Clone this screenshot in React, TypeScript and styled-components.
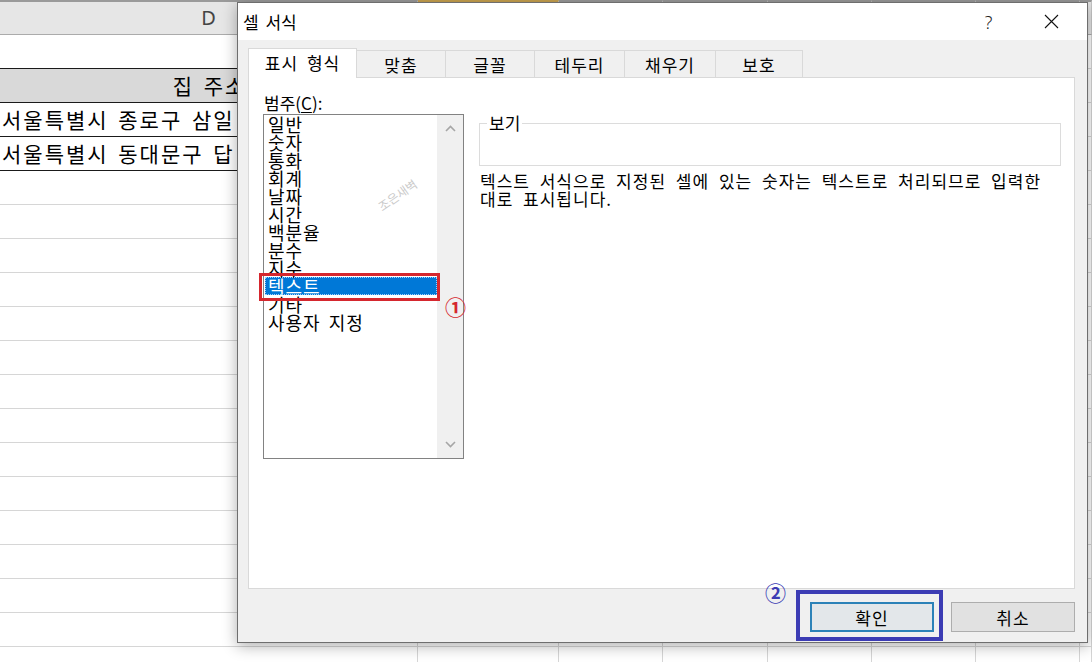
import React from 'react';
import styled, { createGlobalStyle } from 'styled-components';

const GlobalStyle = createGlobalStyle`
  html, body {
    margin: 0;
    padding: 0;
    overflow: hidden;
    background: #ffffff;
  }
  body {
    font-family: "Noto Sans CJK KR", "Noto Sans", sans-serif;
    color: #000;
  }
`;

const Screen = styled.div`
  position: relative;
  width: 1092px;
  height: 662px;
  overflow: hidden;
  background: #ffffff;
`;

// spreadsheet behind the dialog
const Sheet = styled.div`
  display: grid;
  grid-template-columns: 418px 141px 104px 105px 104px 104px 104px 1fr;
  grid-template-rows: 35px;
  grid-auto-rows: 34px;
`;

const HeadCell = styled.div<{ $selected?: boolean }>`
  box-sizing: border-box;
  background: #e6e6e6;
  border-top: 2px solid ${p => (p.$selected ? '#c9a24f' : '#9a9a9a')};
  border-bottom: 1px solid #ababab;
  border-right: 1px solid #c8c8c8;
  font-family: "Noto Sans", sans-serif;
  font-size: 20px;
  line-height: 31px;
  color: #444;
  text-align: center;
`;

const Cell = styled.div<{ $line: 'black' | 'gray'; $fill?: boolean; $center?: boolean }>`
  box-sizing: border-box;
  border-bottom: 1px solid ${p => (p.$line === 'black' ? '#1a1a1a' : '#d6d6d6')};
  border-right: 1px solid #d6d6d6;
  background: ${p => (p.$fill ? '#d9d9d9' : '#ffffff')};
  font-size: 21px;
  line-height: 33px;
  padding-left: 2px;
  white-space: nowrap;
  overflow: hidden;
  letter-spacing: 2px;
  word-spacing: 3px;
  text-align: ${p => (p.$center ? 'center' : 'left')};
`;

// dialog window
const Dialog = styled.div`
  position: absolute;
  left: 237px;
  top: 2px;
  width: 851px;
  height: 641px;
  box-sizing: border-box;
  border: 1px solid #6e6e6e;
  background: #f0f0f0;
  box-shadow: 0 3px 14px rgba(0, 0, 0, 0.32);
  display: flex;
  flex-direction: column;
`;

const TitleBar = styled.div`
  height: 37px;
  background: #ffffff;
  display: flex;
  align-items: center;
  padding-left: 5px;
`;

const Title = styled.div`
  flex: 1;
  font-size: 17px;
  word-spacing: 3px;
`;

const ControlButton = styled.div`
  width: 63px;
  height: 37px;
  display: flex;
  align-items: center;
  justify-content: center;
  font-family: "Noto Sans", sans-serif;
  font-size: 18px;
  font-weight: 300;
  color: #222;
`;

const CloseButton = styled(ControlButton)`
  margin-right: 4px;
`;

const Body = styled.div`
  padding: 8px 12px 0 10px;
`;

const TabRow = styled.div`
  display: flex;
  align-items: flex-end;
  height: 29px;
`;

const Tab = styled.div<{ $active?: boolean; $w: number }>`
  box-sizing: border-box;
  width: ${p => p.$w}px;
  height: ${p => (p.$active ? 30 : 27)}px;
  margin-bottom: ${p => (p.$active ? -1 : 0)}px;
  position: relative;
  z-index: ${p => (p.$active ? 2 : 1)};
  background: ${p => (p.$active ? '#ffffff' : '#f0f0f0')};
  border: 1px solid #d9d9d9;
  border-bottom: none;
  margin-left: ${p => (p.$active ? 0 : -1)}px;
  display: flex;
  align-items: center;
  justify-content: center;
  font-size: 17px;
  letter-spacing: 1px;
  word-spacing: 4px;
  padding-bottom: ${p => (p.$active ? 2 : 0)}px;
`;

const Panel = styled.div`
  box-sizing: border-box;
  height: 512px;
  background: #ffffff;
  border: 1px solid #d9d9d9;
  padding: 14px 13px 0 14px;
  display: flex;
  gap: 15px;
  align-items: flex-start;
`;

const LeftCol = styled.div`
  width: 201px;
  flex-shrink: 0;
`;

const Label = styled.div`
  font-size: 17px;
  line-height: 22px;
  padding-left: 1px;
  u {
    text-decoration: underline;
    text-underline-offset: 2px;
  }
`;

const ListWrap = styled.div`
  position: relative;
`;

const ListBox = styled.div`
  box-sizing: border-box;
  height: 345px;
  border: 1px solid #828282;
  display: flex;
  background: #ffffff;
`;

const Items = styled.div`
  flex: 1;
`;

const Item = styled.div<{ $selected?: boolean }>`
  box-sizing: border-box;
  height: 18px;
  line-height: 18px;
  font-size: 18px;
  padding-left: 3px;
  margin-left: 1px;
  white-space: nowrap;
  letter-spacing: 1px;
  word-spacing: 3px;
  background: ${p => (p.$selected ? '#0078d7' : 'transparent')};
  color: ${p => (p.$selected ? '#ffffff' : '#000')};
  outline: ${p => (p.$selected ? '1px dotted #9fd0ff' : 'none')};
  outline-offset: -1px;
`;

const ScrollBar = styled.div`
  width: 26px;
  background: #f0f0f0;
  display: flex;
  flex-direction: column;
  justify-content: space-between;
  align-items: center;
  padding: 10px 0;
`;

const Watermark = styled.div`
  position: absolute;
  left: 112px;
  top: 72px;
  font-size: 12px;
  color: #cacaca;
  transform: rotate(-35deg);
  white-space: nowrap;
`;

const RedMark = styled.div`
  position: absolute;
  left: -4px;
  top: 159px;
  width: 181px;
  height: 28px;
  box-sizing: border-box;
  border: 3px solid #d5272e;
`;

const Badge = styled.div<{ $color: string }>`
  position: absolute;
  font-size: 21px;
  font-weight: 700;
  line-height: 1;
  color: ${p => p.$color};
`;

const RightCol = styled.div`
  flex: 1;
  padding-top: 21px;
`;

const Preview = styled.fieldset`
  box-sizing: border-box;
  margin: 0;
  height: 53px;
  padding: 0 8px;
  border: 1px solid #dcdcdc;
  legend {
    font-size: 17px;
    line-height: 20px;
    padding: 0 2px;
    margin-left: -1px;
  }
`;

const Description = styled.div`
  margin-top: 6px;
  font-size: 17px;
  line-height: 18px;
  letter-spacing: 1px;
  word-spacing: 5px;
  padding-left: 1px;
`;

const Footer = styled.div`
  display: flex;
  justify-content: flex-end;
  gap: 17px;
  padding-top: 13px;
`;

const ButtonWrap = styled.div`
  position: relative;
`;

const Button = styled.div<{ $primary?: boolean }>`
  box-sizing: border-box;
  width: 124px;
  height: 30px;
  display: flex;
  align-items: center;
  justify-content: center;
  font-size: 17px;
  letter-spacing: 1px;
  background: ${p => (p.$primary ? '#e3e7ea' : '#e1e1e1')};
  border: ${p => (p.$primary ? '2px solid #2c82b8' : '1px solid #adadad')};
`;

const BlueMark = styled.div`
  position: absolute;
  left: -14px;
  top: -12px;
  right: -9px;
  bottom: -9px;
  border: 4px solid #3c3cb4;
`;

const categories = ['일반', '숫자', '통화', '회계', '날짜', '시간', '백분율', '분수', '지수', '텍스트', '기타', '사용자 지정'];
const tabs = [
  { label: '표시 형식', w: 109 },
  { label: '맞춤', w: 90 },
  { label: '글꼴', w: 90 },
  { label: '테두리', w: 91 },
  { label: '채우기', w: 92 },
  { label: '보호', w: 88 },
];

const sheetRows: { text: string; line: 'black' | 'gray'; fill?: boolean; center?: boolean }[] = [
  { text: '', line: 'black' },
  { text: '집 주소', line: 'black', fill: true, center: true },
  { text: '서울특별시 종로구 삼일', line: 'black' },
  { text: '서울특별시 동대문구 답', line: 'black' },
  ...Array.from({ length: 15 }, () => ({ text: '', line: 'gray' as const })),
];

const headers = ['D', '', '', '', '', '', '', ''];

const App: React.FC = () => {
  return (
    <Screen>
      <GlobalStyle />
      <Sheet>
        {headers.map((h, i) => (
          <HeadCell key={'h' + i} $selected={i === 1}>{h}</HeadCell>
        ))}
        {sheetRows.map((r, ri) =>
          headers.map((_, ci) => (
            <Cell
              key={ri + '-' + ci}
              $line={ci === 0 || ci === 1 ? r.line : 'gray'}
              $fill={ci <= 1 && r.fill}
              $center={r.center}
            >
              {ci === 0 ? r.text : ''}
            </Cell>
          ))
        )}
      </Sheet>

      <Dialog>
        <TitleBar>
          <Title>셀 서식</Title>
          <ControlButton>?</ControlButton>
          <CloseButton>
            <svg width="15" height="15" viewBox="0 0 15 15">
              <path d="M1 1 L14 14 M14 1 L1 14" stroke="#111" strokeWidth="1.1" fill="none" />
            </svg>
          </CloseButton>
        </TitleBar>

        <Body>
          <TabRow>
            {tabs.map((t, i) => (
              <Tab key={t.label} $w={t.w} $active={i === 0}>{t.label}</Tab>
            ))}
          </TabRow>
          <Panel>
            <LeftCol>
              <Label>범주(<u>C</u>):</Label>
              <ListWrap>
                <ListBox>
                  <Items>
                    {categories.map(c => (
                      <Item key={c} $selected={c === '텍스트'}>{c}</Item>
                    ))}
                  </Items>
                  <ScrollBar>
                    <svg width="11" height="7" viewBox="0 0 11 7">
                      <polyline points="1,6 5.5,1.5 10,6" stroke="#a6a6a6" strokeWidth="1.6" fill="none" />
                    </svg>
                    <svg width="11" height="7" viewBox="0 0 11 7">
                      <polyline points="1,1 5.5,5.5 10,1" stroke="#a6a6a6" strokeWidth="1.6" fill="none" />
                    </svg>
                  </ScrollBar>
                </ListBox>
                <Watermark>조은새벽</Watermark>
                <RedMark />
                <Badge $color="#d5272e" style={{ left: 182, top: 182 }}>①</Badge>
              </ListWrap>
            </LeftCol>
            <RightCol>
              <Preview>
                <legend>보기</legend>
              </Preview>
              <Description>
                텍스트 서식으로 지정된 셀에 있는 숫자는 텍스트로 처리되므로 입력한 대로 표시됩니다.
              </Description>
            </RightCol>
          </Panel>
          <Footer>
            <ButtonWrap>
              <Button $primary>확인</Button>
              <BlueMark />
              <Badge $color="#3c3cb4" style={{ left: -45, top: -20 }}>②</Badge>
            </ButtonWrap>
            <Button>취소</Button>
          </Footer>
        </Body>
      </Dialog>
    </Screen>
  );
};

export default App;
